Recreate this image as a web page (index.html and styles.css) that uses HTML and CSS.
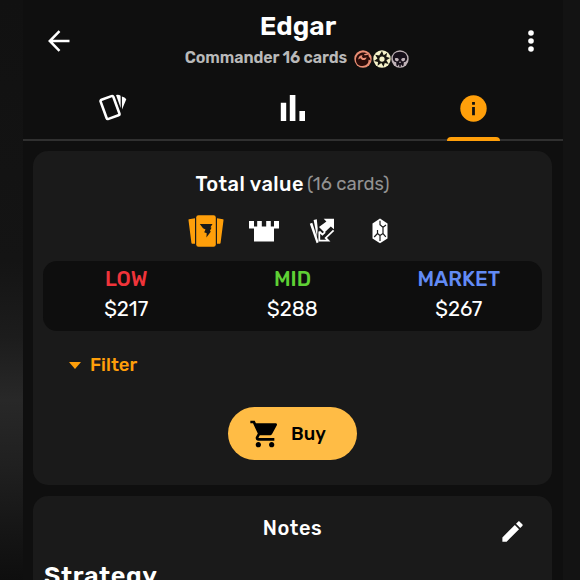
FILE: index.html
```html
<!DOCTYPE html>
<html lang="en">
<head>
    <meta charset="UTF-8">
    <meta name="viewport" content="width=device-width, initial-scale=1.0">
    <title>Edgar</title>
    <link rel="stylesheet" href="styles.css">
</head>
<body>
    <div class="screen">
        <header class="topbar">
            <button class="icon-button" aria-label="Back">
                <svg width="24" height="24" viewBox="0 0 24 24" fill="none" stroke="#fff" stroke-width="2.5">
                    <path d="M22.5 12H3M12.5 2.2L2.8 12l9.7 9.8"/>
                </svg>
            </button>
            <div class="heading">
                <h1 class="title">Edgar</h1>
                <div class="subtitle">
                    <span class="subtitle-text">Commander 16 cards</span>
                    <span class="mana-list">
                        <svg width="18" height="18" viewBox="0 0 18 18">
                            <circle cx="9" cy="9" r="8.7" fill="#e98d74"/>
                            <path d="M2 11C1.500 7 4 3.500 8 2.600c2.500-.5 4.500 0 5.500 1.400-2-.4-3.200 0-3.400.9 1 .8 3 .2 4.700-.4-.5.9-.4 1.700.3 2.400 1 .9 1.500 2 1.200 3.600-.8-.7-1.400-.8-1.800-.4.200 3.500-2.500 5.900-6 6C5 16.200 2.500 14 2 11z" fill="#2a0b08"/>
                            <path d="M4.200 9.500C4.500 6.700 6 5.200 8.600 5.300 7.500 6.500 8 7.700 9.300 7.900c1.500.2 2.200-.5 3.300-.4-.6 1.900-1.700 2.700-3.300 2.600-1.300 0-2.200-.7-2.600-1.800-.9.200-1.700.5-2.500 1.200z" fill="#e98d74"/>
                        </svg>
                        <svg width="18" height="18" viewBox="0 0 18 18">
                            <circle cx="9" cy="9" r="8.700" fill="#f5f2c9"/>
                            <path d="M9 1L10.700 5.200 14.200 2.700 13.300 6.800 17 8 13.400 10.200 15.600 14 11.800 12.900 10.500 16.800 8.300 13.100 4.600 15.700 5 11.900 1 11 4.500 8.600 2.200 4.700 6.200 5.500z" fill="#17150f"/>
                            <circle cx="9" cy="9.100" r="2.600" fill="#f5f2c9"/>
                        </svg>
                        <svg width="18" height="18" viewBox="0 0 18 18">
                            <circle cx="9" cy="9" r="8.700" fill="#c0b3b8"/>
                            <path d="M9 1.700C4.500 1.700 1.800 4.600 1.800 8c0 1.800.6 2.900 1.600 3.700l1.800.6.200 3.200 1.600.8.300-1.600h.9v2h1.600v-2h.9l.3 1.600 1.600-.8.200-3.200 1.800-.6c1-.8 1.600-1.900 1.600-3.700C16.200 4.600 13.500 1.700 9 1.700z" fill="#17101a"/>
                            <path d="M3.900 8.500c1.200-.8 3.200-.4 3.900.7-.1 1.500-1.100 2.200-2.200 2-1.200-.2-1.800-1.400-1.700-2.700zM14.100 8.500c-1.200-.8-3.200-.4-3.900.7.1 1.500 1.100 2.200 2.200 2 1.200-.2 1.800-1.400 1.700-2.700zM9 11l.9 2H8.100z" fill="#c0b3b8"/>
                        </svg>
                    </span>
                </div>
            </div>
            <button class="icon-button" aria-label="More">
                <svg width="24" height="24" viewBox="0 0 24 24" fill="#fff">
                    <circle cx="12" cy="4" r="2.800"/>
                    <circle cx="12" cy="12" r="2.800"/>
                    <circle cx="12" cy="20" r="2.800"/>
                </svg>
            </button>
        </header>

        <nav class="tabs">
            <a class="tab">
                <svg width="30" height="28" viewBox="0 0 30 28">
                    <rect x="5.200" y="3.300" width="13.600" height="20.400" rx="1.500" transform="rotate(-20 12 13.500)" fill="none" stroke="#fff" stroke-width="2.600"/>
                    <path d="M18 1q3-.5 4.600.7l.1 12.300zM23.900 2.400q3 .7 4.400 2.900l-4.300 10.200z" fill="#fff"/>
                </svg>
            </a>
            <a class="tab">
                <svg width="26" height="26" viewBox="0 0 26 26" fill="#fff">
                    <path d="M.8 7.700h5.400V26H.8zM9.800 0h5.600v26H9.800zM19.400 16H25v10h-5.600z"/>
                </svg>
            </a>
            <a class="tab active">
                <svg width="27" height="27" viewBox="0 0 27 27">
                    <circle cx="13.500" cy="13.500" r="13.200" fill="#ff9f0a"/>
                    <path d="M12.100 7h2.800v2.700h-2.800zM12.100 12h2.800v8.200h-2.800z" fill="#111"/>
                </svg>
            </a>
        </nav>

        <main class="content">
            <section class="card value-card">
                <h2 class="value-title">
                    <span class="value-label">Total value</span>
                    <span class="value-count">(16 cards)</span>
                </h2>

                <div class="sources">
                    <svg width="36" height="32" viewBox="0 0 36 32">
                        <path d="M1 4.300l6-1v25.500H4.600c-.8 0-1.100-.4-1.200-1.100L.5 5.300c-.1-.6 0-.9.500-1zM35 4.300l-6-1v25.500h2.400c.8 0 1.100-.4 1.200-1.100l2.900-22.400c.1-.6 0-.9-.5-1z" fill="#ff9f0a"/>
                        <rect x="8.200" y=".3" width="19.600" height="31.400" rx="2.300" fill="#ff9f0a"/>
                        <path d="M11.800 9h12.700l-2 3.200 1 .5-1.600 3.400 1 .3-4.500 6.100.3-4.300-2.500-1 1.300-2.700-2.500-1.200z" fill="#1a1a1a"/>
                    </svg>
                    <svg width="30" height="22" viewBox="0 0 30 22" fill="#fff">
                        <path d="M0 1h5v5.500h3.200V1h4.600v5.500h4.400V1h4.600v5.500H25V1h5v7.500h-5v13H5v-13H0z"/>
                    </svg>
                    <svg width="26" height="26" viewBox="0 0 26 26">
                        <path d="M.8 5.700l2.500-.9 6.300 19.500-2 .9zM4.600 1.900l3.200-.6.9 9.200-.7 8.500z" fill="#fff"/>
                        <path d="M14.700.8H25v10.500l-3.200-2.900-6.300 6.200L10 9.100l7.400-5.700z" fill="#fff"/>
                        <path d="M10.300 13.500v9.100h9l-2.600-2.700 7.900-7.600M10.300 13.500l3.100 3 2.700-2.400" fill="none" stroke="#fff" stroke-width="1.800"/>
                    </svg>
                    <svg width="16" height="26" viewBox="0 0 16 26">
                        <path d="M8 .5l7.500 5v15L8 25.300.5 20.500v-15z" fill="#fff"/>
                        <path d="M8 2.700v4l3 2.700M14 7l-3 2.400v6.200M8 23v-5.500l-2.500-2V12M5.500 15.500L2.200 19M8 17.500l3-1.900 2.800 3.200" fill="none" stroke="#1a1a1a" stroke-width="1.200"/>
                    </svg>
                </div>

                <div class="prices">
                    <div class="price">
                        <div class="price-label low">LOW</div>
                        <div class="price-value">$217</div>
                    </div>
                    <div class="price">
                        <div class="price-label mid">MID</div>
                        <div class="price-value">$288</div>
                    </div>
                    <div class="price">
                        <div class="price-label market">MARKET</div>
                        <div class="price-value">$267</div>
                    </div>
                </div>

                <div class="filter">
                    <span class="filter-arrow"></span>
                    <span>Filter</span>
                </div>

                <button class="buy">
                    <svg width="32" height="32" viewBox="0 0 24 24">
                        <path d="M7 18c-1.100 0-1.990.9-1.990 2S5.900 22 7 22s2-.9 2-2-.9-2-2-2zM1 2v2h2l3.600 7.590-1.350 2.450c-.16.280-.25.610-.25.960 0 1.100.9 2 2 2h12v-2H7.420c-.14 0-.25-.11-.25-.25l.03-.12.900-1.630h7.450c.750 0 1.410-.41 1.750-1.030l3.580-6.490c.080-.14.120-.31.120-.48 0-.55-.45-1-1-1H5.210l-.94-2H1zm16 16c-1.100 0-1.990.9-1.990 2s.89 2 1.990 2 2-.9 2-2-.9-2-2-2z"/>
                    </svg>
                    <span>Buy</span>
                </button>
            </section>

            <section class="card notes-card">
                <div class="notes-header">
                    <h2 class="notes-title">Notes</h2>
                    <svg class="notes-edit" width="27" height="27" viewBox="0 0 24 24" fill="#fff">
                        <path d="M3 17.250V21h3.750L17.810 9.940l-3.750-3.750L3 17.250zM20.710 7.040c.390-.390.390-1.020 0-1.410l-2.340-2.340c-.390-.390-1.020-.390-1.410 0l-1.830 1.830 3.750 3.750 1.830-1.830z"/>
                    </svg>
                </div>
                <h3 class="notes-heading">Strategy</h3>
            </section>
        </main>
    </div>
</body>
</html>
```

FILE: styles.css
```css
* {
    box-sizing: border-box;
}

body {
    margin: 0;
    height: 580px;
    overflow: hidden;
    display: flex;
    justify-content: flex-start;
    padding-left: 23px;
    background: linear-gradient(to right, transparent 50%, #131313 50%),
        linear-gradient(#111 0, #141414 45%, #1c1c1c 58%, #282828 69%, #202020 80%, #141414 93%, #0e0e0e 100%);
    color: #fff;
    font-family: Rubik, Roboto, sans-serif;
}

h1, h2, h3 {
    margin: 0;
    font-weight: 500;
}

button {
    border: 0;
    padding: 0;
    background: none;
    color: inherit;
    font-family: inherit;
}

svg {
    display: block;
    flex: none;
}

.screen {
    width: 540px;
    height: 580px;
    overflow: hidden;
    background-color: #0f0f0f;
}

.topbar {
    display: grid;
    grid-template-columns: 50px 1fr 50px;
    height: 75px;
    padding: 0 7px 0 11px;
}

.icon-button {
    display: flex;
    justify-content: center;
    height: 82px;
    align-items: center;
}

.heading {
    padding-top: 11px;
    text-align: center;
}

.title {
    padding-left: 6px;
    font-size: 26.5px;
    font-weight: 600;
    line-height: 30px;
}

.subtitle {
    display: flex;
    justify-content: center;
    gap: 7px;
    margin-top: 5px;
    padding-left: 4px;
    color: #b9b9b9;
    font-size: 16px;
    font-weight: 600;
    line-height: 22px;
}

.subtitle-text {
    letter-spacing: -0.1px;
    padding-top: 1px;
}

.mana-list {
    display: flex;
    gap: 0.5px;
    padding-top: 4px;
}

.tabs {
    display: grid;
    grid-template-columns: repeat(3, 1fr);
    height: 66px;
    border-bottom: 2px solid #303030;
}

.tab {
    display: flex;
    flex-direction: column;
    align-items: center;
    justify-content: center;
    height: 66px;
}

.tab.active::after {
    content: '';
    width: 53px;
    height: 4px;
    margin-top: 15px;
    margin-bottom: -19px;
    border-radius: 4px 4px 0 0;
    background-color: #ff9f0a;
}

.content {
    display: flex;
    flex-direction: column;
    gap: 11px;
    padding: 10px 11px 0 10px;
}

.card {
    border-radius: 15px;
    background-color: #1a1a1a;
}

.value-card {
    height: 334px;
    padding: 20px 10px 0;
}

.value-title {
    display: flex;
    justify-content: center;
    gap: 3px;
    font-size: 20px;
    line-height: 26px;
}

.value-label {
    letter-spacing: 0.5px;
}

.value-count {
    color: #929292;
    font-size: 18.5px;
    font-weight: 400;
}

.sources {
    display: grid;
    grid-template-columns: repeat(4, 58px);
    justify-content: center;
    justify-items: center;
    align-items: center;
    height: 64px;
    padding-top: 4px;
}

.prices {
    display: grid;
    grid-template-columns: repeat(3, 1fr);
    height: 70px;
    padding-top: 3px;
    border-radius: 14px;
    background-color: #0e0e0e;
    text-align: center;
    font-size: 20.5px;
    line-height: 30px;
}

.price-label {
    font-weight: 500;
}

.low {
    color: #f0343a;
}

.mid {
    color: #5fd035;
}

.market {
    color: #628bf5;
}

.filter {
    display: flex;
    align-items: center;
    gap: 9px;
    margin-top: 22px;
    padding-left: 26px;
    color: #ff9f0a;
    font-size: 18.5px;
    font-weight: 500;
    line-height: 25px;
}

.filter-arrow {
    border: 6.5px solid transparent;
    border-top: 7px solid #ff9f0a;
    border-bottom: 0;
}

.buy {
    display: flex;
    align-items: center;
    gap: 10px;
    width: 129px;
    height: 53px;
    margin: 29px auto 0;
    padding-left: 21px;
    border-radius: 27px;
    background-color: #ffbc45;
    color: #000;
    font-size: 18.5px;
    font-weight: 500;
}

.notes-card {
    height: 120px;
    padding-top: 15px;
}

.notes-header {
    display: grid;
    grid-template-columns: 60px 1fr 60px;
    align-items: center;
    height: 30px;
    padding-right: 10px;
    padding-left: 10px;
}

.notes-title {
    grid-column: 2;
    text-align: center;
    font-size: 20px;
    letter-spacing: 0.6px;
}

.notes-edit {
    justify-self: end;
    margin-top: 7px;
    margin-right: 16px;
}

.notes-heading {
    margin-top: 20px;
    padding-left: 11px;
    font-size: 25px;
    font-weight: 600;
    line-height: 30px;
    letter-spacing: 0.6px;
}
```
